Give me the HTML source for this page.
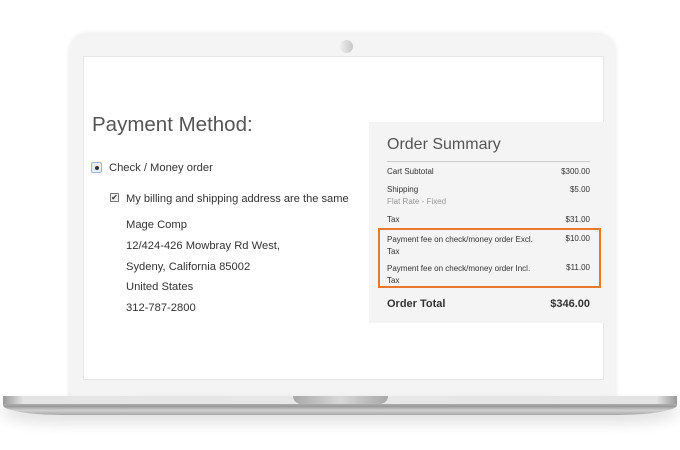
<!DOCTYPE html>
<html><head><style>
*{margin:0;padding:0;box-sizing:border-box}
body{width:680px;height:450px;background:#fff;position:relative;overflow:hidden;font-family:"Liberation Sans",sans-serif;color:#333}
.lid{position:absolute;left:70px;top:34px;width:545px;height:370px;background:#f4f4f4;border-radius:18px 18px 0 0;box-shadow:0 0 6px rgba(0,0,0,.12)}
.cam{position:absolute;left:340px;top:40px;width:13px;height:13px;border-radius:50%;background:linear-gradient(90deg,#eee,#c8c8c8)}
.screen{position:absolute;left:83px;top:56px;width:521px;height:324px;background:#fff;border:1px solid #e6e6e6}
.base{position:absolute;left:3px;top:396px;width:674px;height:19px;border-radius:2px 2px 60px 60px/2px 2px 10px 10px;background:linear-gradient(180deg,#d8d8d8 0%,#b5b5b5 35%,#9a9a9a 55%,#d0d0d0 75%,#a8a8a8 100%);box-shadow:0 8px 14px rgba(0,0,0,.12)}
.base:before{content:"";position:absolute;left:0;top:0;width:100%;height:8px;background:linear-gradient(90deg,#999,#e4e4e4 3%,#e8e8e8 50%,#e4e4e4 97%,#999)}
.notch{position:absolute;left:293px;top:396px;width:95px;height:8px;border-radius:0 0 8px 8px;background:linear-gradient(90deg,#a8a8a8,#d8d8d8 50%,#a8a8a8)}
.t{position:absolute;white-space:nowrap}
.panel{position:absolute;left:369px;top:122px;width:235px;height:201px;background:#f4f4f4}
.r{position:absolute;font-size:8px;color:#333}
.orange{position:absolute;left:378px;top:228px;width:223px;height:60px;border:2px solid #e8782a}
</style></head><body>
<div class="lid"></div>
<div class="cam"></div>
<div class="screen"></div>
<div class="panel"></div>
<div class="base"></div>
<div class="notch"></div>

<div class="t" style="left:92px;top:113px;font-size:20.5px;color:#555">Payment Method:</div>
<div style="position:absolute;left:91px;top:162px;width:11px;height:11px;border:1px solid #9ab8d8;background:#e8eef5;border-radius:2px"></div>
<div style="position:absolute;left:95px;top:166px;width:4px;height:4px;border-radius:50%;background:#333"></div>
<div class="t" style="left:109px;top:162px;font-size:11.2px">Check / Money order</div>
<div style="position:absolute;left:110px;top:193px;width:9px;height:9px;border:1px solid #777;border-radius:1px;background:#eee;font-size:8px;line-height:7px;text-align:center">✔</div>
<div class="t" style="left:126px;top:193px;font-size:11.1px">My billing and shipping address are the same</div>
<div class="t" style="left:126px;top:219px;font-size:11.2px">Mage Comp</div>
<div class="t" style="left:126px;top:240px;font-size:11.2px">12/424-426 Mowbray Rd West,</div>
<div class="t" style="left:126px;top:261px;font-size:11.2px">Sydeny, California 85002</div>
<div class="t" style="left:126px;top:281px;font-size:11.2px">United States</div>
<div class="t" style="left:126px;top:302px;font-size:11.2px">312-787-2800</div>

<div class="t" style="left:387px;top:136px;font-size:16px;color:#555">Order Summary</div>
<div style="position:absolute;left:387px;top:161px;width:203px;height:1px;background:#ccc"></div>
<div class="r" style="left:387px;top:167px">Cart Subtotal</div><div class="r" style="right:90px;top:167px">$300.00</div>
<div class="r" style="left:387px;top:185px">Shipping</div><div class="r" style="right:90px;top:185px">$5.00</div>
<div class="r" style="left:387px;top:197px;color:#999">Flat Rate - Fixed</div>
<div class="r" style="left:387px;top:215px">Tax</div><div class="r" style="right:90px;top:215px">$31.00</div>
<div class="r" style="left:387px;top:234px;line-height:12px">Payment fee on check/money order Excl.<br>Tax</div><div class="r" style="right:90px;top:234px">$10.00</div>
<div class="r" style="left:387px;top:263px;line-height:12px">Payment fee on check/money order Incl.<br>Tax</div><div class="r" style="right:90px;top:263px">$11.00</div>
<div class="orange"></div>
<div class="t" style="left:387px;top:298px;font-size:11px;font-weight:bold">Order Total</div>
<div class="t" style="right:90px;top:298px;font-size:11px;font-weight:bold">$346.00</div>
</body></html>
